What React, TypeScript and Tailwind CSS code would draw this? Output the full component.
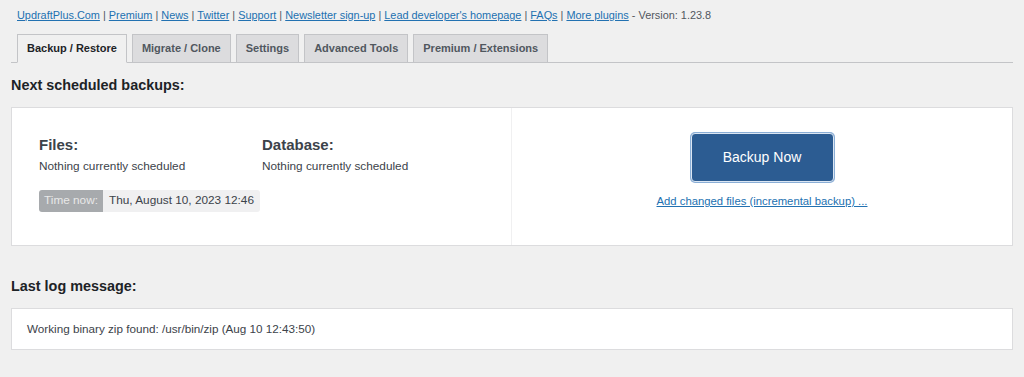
import React from 'react';

const links = [
  'UpdraftPlus.Com',
  'Premium',
  'News',
  'Twitter',
  'Support',
  'Newsletter sign-up',
  "Lead developer's homepage",
  'FAQs',
  'More plugins',
];

const tabs = ['Backup / Restore', 'Migrate / Clone', 'Settings', 'Advanced Tools', 'Premium / Extensions'];

export default function App() {
  return (
    <div
      className="w-[1024px] h-[377px] overflow-hidden bg-[#f0f0f0] text-[#3c434a]"
      style={{ fontFamily: '"Liberation Sans", Arial, sans-serif' }}
    >
      <div className="px-[11px]">
        {/* Top links */}
        <p className="pt-[8px] pl-[6px] text-[10.9px] leading-[14px] text-[#50575e]">
          {links.map((l, i) => (
            <React.Fragment key={l}>
              {i > 0 && ' | '}
              <a href="#" className="text-[#2271b1] underline">
                {l}
              </a>
            </React.Fragment>
          ))}
          {' - Version: 1.23.8'}
        </p>

        {/* Tabs */}
        <nav className="mt-[12px] flex items-end gap-[5px] pl-[6px] border-b border-[#c3c4c7]">
          {tabs.map((t, i) => (
            <a
              key={t}
              href="#"
              className={
                i === 0
                  ? 'h-[29px] -mb-px flex items-center px-[9px] text-[11px] font-bold text-[#1d2327] bg-[#f0f0f0] border border-[#c3c4c7] border-b-[#f0f0f0]'
                  : 'h-[28px] flex items-center px-[9px] text-[11px] font-bold text-[#50575e] bg-[#dcdcde] border border-[#c3c4c7] border-b-0'
              }
            >
              {t}
            </a>
          ))}
        </nav>

        {/* Next scheduled */}
        <h2 className="mt-[13px] text-[14.4px] font-bold text-[#1d2327] leading-[18px]">Next scheduled backups:</h2>

        <div className="mt-[13px] h-[139px] w-[1002px] flex bg-white border border-[#dcdcde]">
          <div className="w-[500px] border-r border-[#f0f0f1] pl-[27px] pt-[26px]">
            <div className="flex">
              <div className="w-[223px]">
                <h3 className="text-[15px] font-bold text-[#3c434a] leading-[22px]">Files:</h3>
                <p className="mt-[3px] text-[11.8px] leading-[14px] text-[#3c434a]">Nothing currently scheduled</p>
              </div>
              <div>
                <h3 className="text-[15px] font-bold text-[#3c434a] leading-[22px]">Database:</h3>
                <p className="mt-[3px] text-[11.8px] leading-[14px] text-[#3c434a]">Nothing currently scheduled</p>
              </div>
            </div>
            <div className="mt-[17px] inline-flex h-[22px] rounded-[3px] overflow-hidden text-[11.8px]">
              <span className="flex items-center px-[5px] bg-[#a7aaad] text-[#e8e8e8] w-[64px]">Time now:</span>
              <span className="flex items-center px-[6px] bg-[#f0f0f1] text-[#3c434a]">Thu, August 10, 2023 12:46</span>
            </div>
          </div>
          <div className="flex-1 flex flex-col items-center pt-[24px]">
            <div className="rounded-[5px] p-px bg-[#8aaed6]">
              <button className="w-[143px] h-[49px] rounded-[4px] bg-[#2c5c92] border border-[#dbe6f3] text-white text-[14px]">
                Backup Now
              </button>
            </div>
            <a href="#" className="mt-[11px] text-[11.3px] leading-[14px] text-[#2271b1] underline">
              Add changed files (incremental backup) ...
            </a>
          </div>
        </div>

        {/* Last log */}
        <h2 className="mt-[31px] text-[14.4px] font-bold text-[#1d2327] leading-[18px]">Last log message:</h2>
        <div className="mt-[13px] h-[42px] w-[1002px] flex items-center bg-white border border-[#dcdcde] pl-[15px] text-[11.7px] text-[#3c434a]">
          Working binary zip found: /usr/bin/zip (Aug 10 12:43:50)
        </div>
      </div>
    </div>
  );
}
